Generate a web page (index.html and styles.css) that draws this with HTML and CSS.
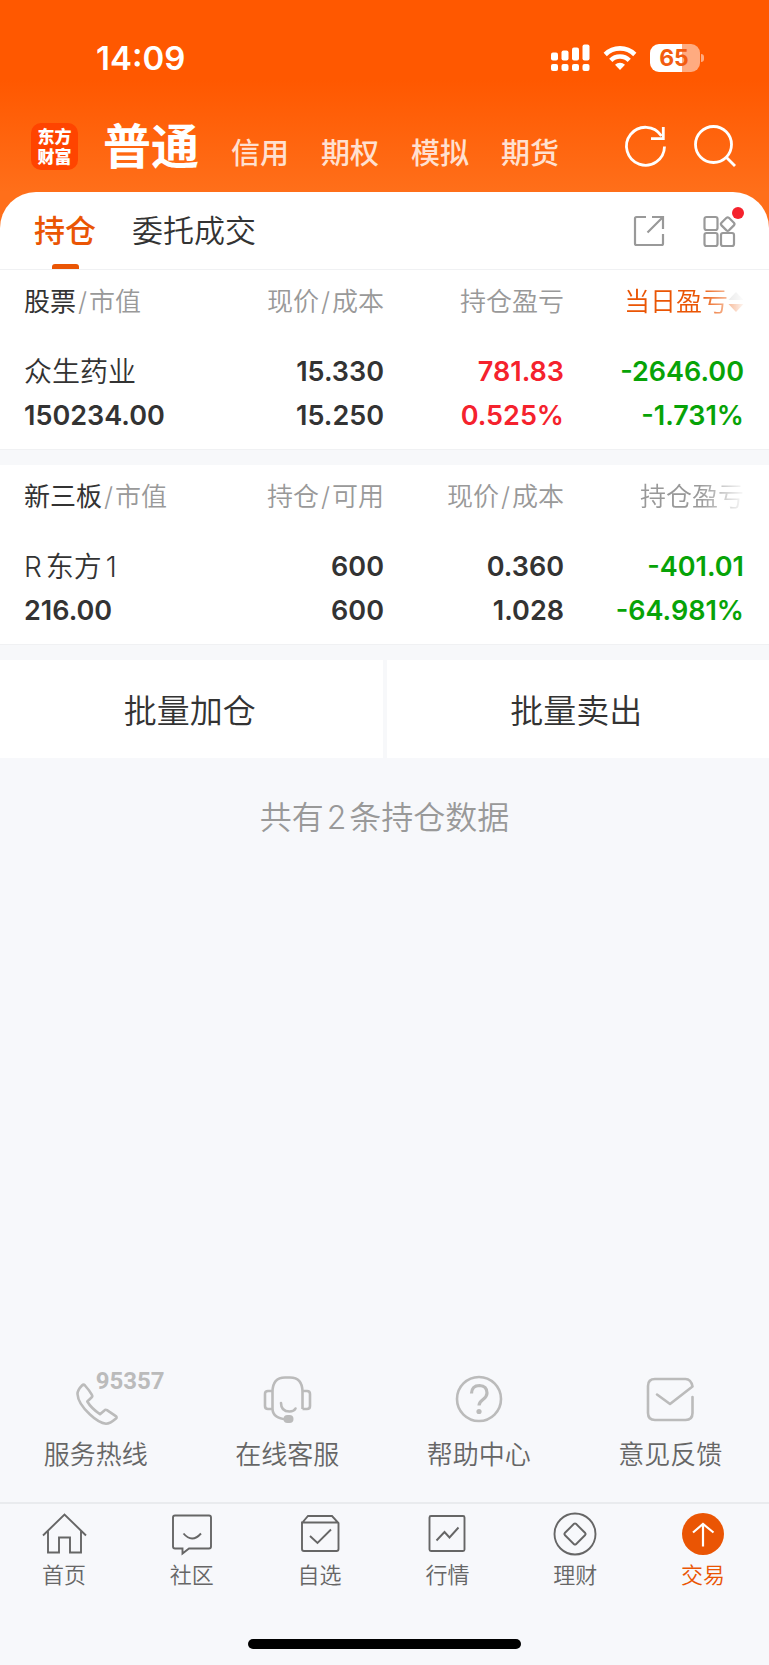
FILE: index.html
```html
<!DOCTYPE html>
<html lang="zh-CN">
<head>
<meta charset="utf-8">
<meta name="viewport" content="width=device-width, initial-scale=1">
<title>持仓</title>
<link rel="stylesheet" href="styles.css">
</head>
<body>
<header class="hero">
  <div class="status">
    <time class="clock">14:09</time>
    <div class="status-icons">
      <svg width="39" height="28" viewBox="0 0 39 28" fill="#fff" aria-hidden="true">
        <rect x="0" y="8.500" width="7" height="8" rx="2"/><rect x="10.500" y="6.500" width="7" height="10" rx="2"/><rect x="21" y="3.500" width="7" height="13" rx="2"/><rect x="31.500" y="0.500" width="7" height="16" rx="2"/>
        <rect x="0" y="20" width="7" height="7" rx="2"/><rect x="10.500" y="20" width="7" height="7" rx="2"/><rect x="21" y="20" width="7" height="7" rx="2"/><rect x="31.500" y="20" width="7" height="7" rx="2"/>
      </svg>
      <svg width="34" height="26" viewBox="0 0 34 26" fill="none" stroke="#fff" stroke-width="4.600" aria-hidden="true">
        <path d="M2.200 9.500a21 21 0 0 1 29.600 0"/><path d="M7.800 15.300a13 13 0 0 1 18.400 0"/><path d="M17 25l-5-5.200a7.300 7.300 0 0 1 10 0z" fill="#fff" stroke="none"/>
      </svg>
      <span class="battery"><span class="battery-level">65</span></span>
    </div>
  </div>
  <div class="topbar">
    <div class="logo">东方<br>财富</div>
    <nav class="accounts">
      <a class="account current" href="#">普通</a>
      <a class="account" href="#">信用</a>
      <a class="account" href="#">期权</a>
      <a class="account" href="#">模拟</a>
      <a class="account" href="#">期货</a>
    </nav>
    <div class="actions">
      <button type="button" aria-label="刷新"><svg width="42" height="42" viewBox="0 0 42 42" fill="none" stroke="#fff" stroke-width="2.800"><path d="M39.500 21.500A19 19 0 1 1 36.500 11"/><path d="M38.300 2v11.700H26"/></svg></button>
      <button type="button" aria-label="搜索"><svg width="42" height="42" viewBox="0 0 42 42" fill="none" stroke="#fff" stroke-width="2.800"><circle cx="19.500" cy="19.500" r="18"/><path d="M32 32l9 9"/></svg></button>
    </div>
  </div>
</header>

<main class="card">
  <div class="tabs">
    <nav class="tab-list">
      <a class="tab selected" href="#">持仓</a>
      <a class="tab" href="#">委托成交</a>
    </nav>
    <div class="tools">
      <button type="button" aria-label="分享"><svg width="32" height="32" viewBox="0 0 32 32" fill="none" stroke="#999" stroke-width="2.200"><path d="M13 2H3.500Q2 2 2 3.500v25Q2 30 3.500 30h25q1.500 0 1.500-1.500V19M19 2h11v12M29.500 2.500L14.500 17.500"/></svg></button>
      <button type="button" class="more" aria-label="更多"><svg width="32" height="32" viewBox="0 0 32 32" fill="none" stroke="#999" stroke-width="2.200"><rect x="1.500" y="2" width="13" height="13" rx="2"/><rect x="1.500" y="18" width="13" height="13" rx="2"/><rect x="18" y="18" width="13" height="13" rx="2"/><path d="M23.500 2.800q1.200-.9 2.400 0l5 5q1.200 1.300 0 2.600l-5 5q-1.200.9-2.400 0l-5-5q-1.200-1.300 0-2.600z"/></svg></button>
    </div>
  </div>

  <section class="block">
    <table class="holdings">
      <thead><tr>
        <th><b>股票</b><i>/</i>市值</th>
        <th>现价<i>/</i>成本</th>
        <th>持仓盈亏</th>
        <th class="fade"><button type="button" class="sort">当日盈亏<svg width="16" height="22" viewBox="0 0 16 22" aria-hidden="true"><path d="M8 1l7.500 8H.5z" fill="#ccc"/><path d="M8 21l7.500-8H.5z" fill="#ea5504"/></svg></button></th>
      </tr></thead>
      <tbody>
        <tr><td class="name">众生药业</td><td>15.330</td><td class="up">781.83</td><td class="down">-2646.00</td></tr>
        <tr><td>150234.00</td><td>15.250</td><td class="up">0.525%</td><td class="down">-1.731%</td></tr>
      </tbody>
    </table>
  </section>

  <section class="block">
    <table class="holdings">
      <thead><tr>
        <th><b>新三板</b><i>/</i>市值</th>
        <th>持仓<i>/</i>可用</th>
        <th>现价<i>/</i>成本</th>
        <th class="fade">持仓盈亏</th>
      </tr></thead>
      <tbody>
        <tr><td class="name">R<span class="cjk">东方</span>1</td><td>600</td><td>0.360</td><td class="down">-401.01</td></tr>
        <tr><td>216.00</td><td>600</td><td>1.028</td><td class="down">-64.981%</td></tr>
      </tbody>
    </table>
  </section>

  <div class="batch">
    <button type="button">批量加仓</button>
    <button type="button">批量卖出</button>
  </div>
  <p class="count">共有<span>2</span>条持仓数据</p>
</main>

<nav class="services">
  <a href="#"><span class="service-icon"><svg width="48" height="48" viewBox="0 0 48 48" fill="none" stroke="#bbb" stroke-width="2.600" stroke-linejoin="round"><path d="M13 10.500q-1.500-1.500-3 0Q5.500 15 5.500 19q.5 9.500 12.500 20.500 9 8.500 16 9.200 4 0 10-5.200 1.300-1.200-.2-2.400L35 35.200q-1.500-1-2.600.2L28 39.200Q19 33 15.300 26.500l4.200-4q1.300-1.200.4-2.600Q17.500 15.500 13 10.500z"/></svg><span class="hotline">95357</span></span>服务热线</a>
  <a href="#"><span class="service-icon"><svg width="48" height="48" viewBox="0 0 48 48" fill="none" stroke="#bbb" stroke-width="2.600"><path d="M9.500 34V17Q9.500 2.500 22 2.500h5Q39.500 2.500 39.500 17v17M9.500 16H5q-3 0-3 3v12q0 3 3 3h4.500Q10 43.500 24 44.500M39.500 16H44q3 0 3 3v12q0 3-3 3h-4.500"/><path d="M18 28q0 8.500 8.500 8.500 4.500 0 6-3" stroke-linecap="round"/><rect x="20.500" y="40" width="10" height="8" rx="4" fill="#bbb" stroke="none"/></svg></span>在线客服</a>
  <a href="#"><span class="service-icon"><svg width="48" height="48" viewBox="0 0 48 48" fill="none" stroke="#bbb" stroke-width="2.600"><circle cx="24" cy="24" r="22"/><path d="M16.500 18.500q.3-8 8-8 7.500.3 7.500 7.500 0 3.500-4 6.500-4 3-4 6" stroke-width="3.200"/><circle cx="24" cy="36.500" r="2.600" fill="#bbb" stroke="none"/></svg></span>帮助中心</a>
  <a href="#"><span class="service-icon"><svg width="48" height="48" viewBox="0 0 48 48" fill="none" stroke="#bbb" stroke-width="2.600" stroke-linecap="round" stroke-linejoin="round"><path d="M46.500 22v16q0 7-7 7H9q-7 0-7-7V11q0-7 7-7h30.500q5.500 0 7 7.500L24 29 11 19.500"/></svg></span>意见反馈</a>
</nav>

<footer class="tabbar">
  <nav class="tabbar-items">
    <a href="#"><svg width="44" height="44" viewBox="0 0 44 44" fill="none" stroke="#666" stroke-width="1.900"><path d="M1 22.500L22.500 1.500 44 22.500M6 18v21.500h11V24.500h11v15h11V18"/></svg>首页</a>
    <a href="#"><svg width="44" height="44" viewBox="0 0 44 44" fill="none" stroke="#666" stroke-width="1.900"><path d="M5 2.500h34q2 0 2 2v29q0 2-2 2H19l-6.500 5v-5H5q-2 0-2-2v-29q0-2 2-2z"/><path d="M13.500 20.500q8.500 10 17.500 0"/></svg>社区</a>
    <a href="#"><svg width="44" height="44" viewBox="0 0 44 44" fill="none" stroke="#666" stroke-width="1.900"><path d="M4 10L10 3h24l6.500 7V36q0 2-2 2H6q-2 0-2-2V9.500h36.500M12 23l7.500 7L33 16.500"/></svg>自选</a>
    <a href="#"><svg width="44" height="44" viewBox="0 0 44 44" fill="none" stroke="#666" stroke-width="1.900"><rect x="4.500" y="3" width="35" height="35" rx="1.500"/><path d="M11.500 27.500L19.500 19l5 5.500 9-10"/></svg>行情</a>
    <a href="#"><svg width="44" height="44" viewBox="0 0 44 44" fill="none" stroke="#666" stroke-width="1.900"><circle cx="22" cy="21" r="20.500"/><path d="M21 10.800q1-.8 2 0l9.200 9.200q.8 1 0 2L23 31.200q-1 .8-2 0L11.800 22q-.8-1 0-2z"/></svg>理财</a>
    <a class="active" href="#"><svg width="44" height="44" viewBox="0 0 44 44" fill="none" stroke="#fff" stroke-width="2.200"><circle cx="22" cy="21" r="21" fill="#ea5504" stroke="none"/><path d="M22 33.500V11M12 19.500L22 11l10.500 8.500"/></svg>交易</a>
  </nav>
  <div class="home-indicator"></div>
</footer>
</body>
</html>
```

FILE: styles.css
```css
* { box-sizing: border-box; }

body {
  margin: 0;
  min-height: 100vh;
  display: flex;
  flex-direction: column;
  background: #f7f8fb;
  color: #333;
  font-family: Inter, "Noto Sans CJK SC", sans-serif;
  font-weight: 350;
}

a { color: inherit; text-decoration: none; }

button {
  margin: 0;
  padding: 0;
  border: 0;
  background: none;
  color: inherit;
  font: inherit;
}

svg { display: block; flex: none; overflow: visible; }

.hero {
  padding-bottom: 48px;
  background: linear-gradient(#ff5800 80px, #ff6f1a 192px);
  color: #fff;
}

.status {
  display: flex;
  justify-content: space-between;
  align-items: center;
  height: 112px;
  padding: 3px 69px 0 96px;
}

.clock { font-size: 33px; font-weight: 600; line-height: 40px; }

.status-icons { display: flex; align-items: center; gap: 13px; }

.battery {
  position: relative;
  width: 50px;
  height: 28px;
  border-radius: 9px;
  background: linear-gradient(to right, #fff 65%, #ffab80 65%);
}

.battery::after {
  content: "";
  position: absolute;
  left: 51px;
  top: 10px;
  width: 3px;
  height: 8px;
  border-radius: 0 3px 3px 0;
  background: #ffab80;
}

.battery-level {
  display: block;
  padding-right: 2px;
  color: #f25c10;
  font-size: 23px;
  font-weight: 700;
  line-height: 28px;
  text-align: center;
}

.topbar {
  display: flex;
  align-items: center;
  height: 80px;
  padding: 0 33px 12px 31px;
}

.logo {
  flex: none;
  width: 47px;
  height: 47px;
  padding-top: 3px;
  border-radius: 10px;
  background: #ff4400;
  font-family: "Noto Sans CJK SC", sans-serif;
  font-size: 17px;
  font-weight: 900;
  line-height: 20px;
  text-align: center;
}

.accounts {
  flex: 1;
  display: flex;
  align-items: baseline;
  gap: 32px;
  margin-left: 25px;
  padding-top: 9px;
}

.account {
  color: #ffe0d0;
  font-size: 29px;
  font-weight: 500;
  line-height: 60px;
}

.account.current { color: #fff; font-size: 48px; font-weight: 700; }

.actions { display: flex; gap: 27px; }

.card {
  margin-top: -48px;
  border-radius: 36px 36px 0 0;
  background: linear-gradient(#fff 78px, #f7f8fa 78px);
}

.tabs {
  display: flex;
  justify-content: space-between;
  height: 78px;
  padding: 0 34px;
  border-bottom: 1px solid #f0f1f3;
}

.tab-list { display: flex; gap: 36px; }

.tab {
  position: relative;
  font-size: 31px;
  line-height: 77px;
}

.tab.selected { color: #ea5504; font-weight: 500; }

.tab.selected::after {
  content: "";
  position: absolute;
  left: 18px;
  bottom: 0;
  width: 27px;
  height: 5px;
  border-radius: 3px 3px 0 0;
  background: #ea5504;
}

.tools { display: flex; align-items: center; gap: 38px; }

.more { position: relative; }

.more::after {
  content: "";
  position: absolute;
  right: -9px;
  top: -8px;
  width: 12px;
  height: 12px;
  border-radius: 50%;
  background: #f5222d;
}

.block {
  margin-bottom: 15px;
  padding: 0 25px 11px 24px;
  border-bottom: 1px solid #f0f1f3;
  background: #fff;
}

.holdings {
  width: 100%;
  table-layout: fixed;
  border-collapse: collapse;
  text-align: right;
}

.holdings th, .holdings td { padding: 0; white-space: nowrap; }

.holdings th {
  height: 80px;
  padding-bottom: 16px;
  color: #999;
  font-size: 26px;
  font-weight: 350;
  line-height: 38px;
}

.holdings th:first-child, .holdings td:first-child { text-align: left; }

.holdings b { color: #333; font-weight: 400; }

.holdings i { margin: 0 2px; font-style: normal; }

.holdings .fade {
  -webkit-mask-image: linear-gradient(to right, #000 calc(100% - 44px), rgba(0, 0, 0, 0.05));
  mask-image: linear-gradient(to right, #000 calc(100% - 44px), rgba(0, 0, 0, 0.05));
}

.sort {
  display: inline-flex;
  align-items: center;
  color: #ea5504;
}

.holdings td {
  height: 44px;
  font-size: 27px;
  font-weight: 600;
  line-height: 44px;
}

.holdings .name { font-size: 28px; font-weight: 350; }

.cjk { margin: 0 4px; }

.up { color: #f5222d; }
.down { color: #07a307; }

.batch { display: flex; gap: 4px; }

.batch button {
  flex: 1;
  height: 98px;
  padding-right: 3px;
  background: #fff;
  font-size: 33px;
}

.count {
  margin: 0;
  padding: 37px 0;
  background: #f7f8fb;
  color: #999;
  font-size: 32px;
  line-height: 46px;
  text-align: center;
}

.count span { margin: 0 3px; }

.services {
  display: flex;
  margin-top: auto;
  padding: 0 3px 27px 0;
  color: #666;
  font-size: 26px;
  line-height: 40px;
}

.services a {
  flex: 1;
  display: flex;
  flex-direction: column;
  align-items: center;
  gap: 12px;
}

.service-icon { position: relative; }

.hotline {
  position: absolute;
  left: 24px;
  top: -8px;
  color: #bbb;
  font-family: Roboto, sans-serif;
  font-size: 24px;
  font-weight: 700;
  line-height: 28px;
}

.tabbar { border-top: 2px solid #e9ebee; }

.tabbar-items { display: flex; padding: 9px 2px 0 0; }

.tabbar-items a {
  flex: 1;
  display: flex;
  flex-direction: column;
  align-items: center;
  gap: 2px;
  color: #666;
  font-size: 22px;
  line-height: 32px;
}

.tabbar-items .active { color: #ea5504; }

.home-indicator {
  width: 35.5%;
  height: 10px;
  margin: 48px auto 16px;
  border-radius: 5px;
  background: #000;
}
```
